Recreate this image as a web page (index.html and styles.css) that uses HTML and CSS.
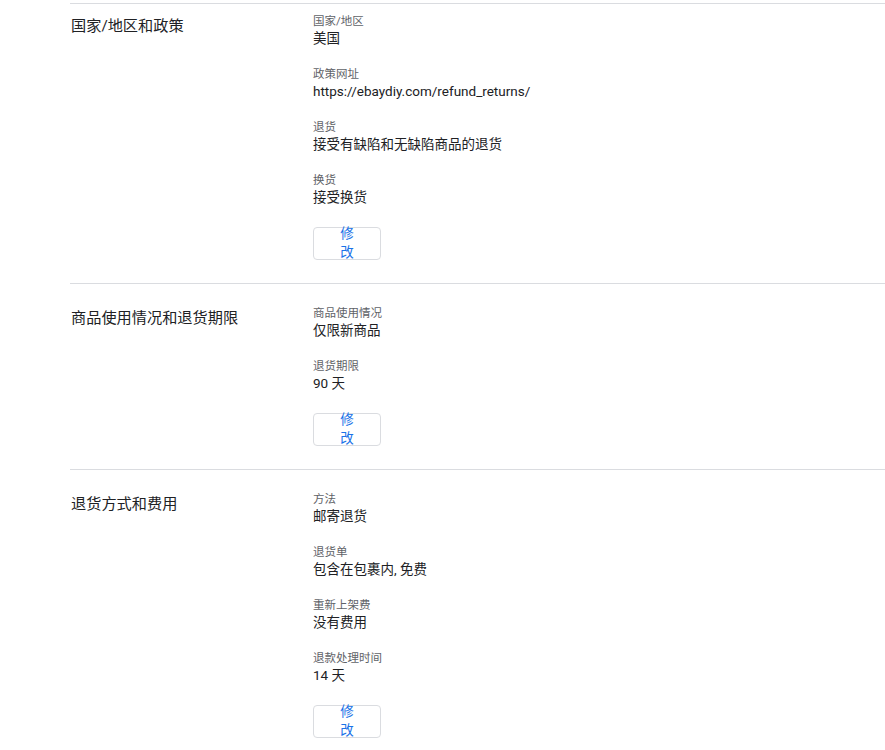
FILE: index.html
```html
<!DOCTYPE html>
<html lang="zh-CN">
<head>
    <meta charset="UTF-8">
    <title>退货政策</title>
    <link rel="stylesheet" href="styles.css">
</head>
<body>
    <div class="policy">
        <!-- 国家/地区和政策 -->
        <section class="block first">
            <h2 class="block-title">国家/地区和政策</h2>
            <div class="fields">
                <div class="field">
                    <div class="label">国家/地区</div>
                    <div class="value">美国</div>
                </div>
                <div class="field">
                    <div class="label">政策网址</div>
                    <div class="value">https://ebaydiy.com/refund_returns/</div>
                </div>
                <div class="field">
                    <div class="label">退货</div>
                    <div class="value">接受有缺陷和无缺陷商品的退货</div>
                </div>
                <div class="field">
                    <div class="label">换货</div>
                    <div class="value">接受换货</div>
                </div>
                <button class="edit-btn"><span>修改</span></button>
            </div>
        </section>

        <!-- 商品使用情况和退货期限 -->
        <section class="block">
            <h2 class="block-title">商品使用情况和退货期限</h2>
            <div class="fields">
                <div class="field">
                    <div class="label">商品使用情况</div>
                    <div class="value">仅限新商品</div>
                </div>
                <div class="field">
                    <div class="label">退货期限</div>
                    <div class="value">90 天</div>
                </div>
                <button class="edit-btn"><span>修改</span></button>
            </div>
        </section>

        <!-- 退货方式和费用 -->
        <section class="block">
            <h2 class="block-title">退货方式和费用</h2>
            <div class="fields">
                <div class="field">
                    <div class="label">方法</div>
                    <div class="value">邮寄退货</div>
                </div>
                <div class="field">
                    <div class="label">退货单</div>
                    <div class="value">包含在包裹内, 免费</div>
                </div>
                <div class="field">
                    <div class="label">重新上架费</div>
                    <div class="value">没有费用</div>
                </div>
                <div class="field">
                    <div class="label">退款处理时间</div>
                    <div class="value">14 天</div>
                </div>
                <button class="edit-btn"><span>修改</span></button>
            </div>
        </section>
    </div>
</body>
</html>
```

FILE: styles.css
```css
body {
    margin: 0;
    font-family: Roboto, "Noto Sans CJK SC", sans-serif;
    background-color: #ffffff;
    color: #202124;
}
.policy {
    padding-top: 3px;
    margin-left: 70px;
}
.block {
    display: flex;
    border-top: 1px solid #dadce0;
    padding: 22px 0 23px 0;
}
.block.first {
    padding-top: 10px;
}
.block-title {
    width: 242px;
    margin: 0;
    padding: 2px 0 0 1px;
    font-size: 15.2px;
    font-weight: normal;
    line-height: 20px;
    color: #202124;
}
.fields {
    display: flex;
    flex-direction: column;
    align-items: flex-start;
}
.field {
    margin-bottom: 19px;
}
.label {
    font-size: 11.5px;
    line-height: 15px;
    color: #5f6368;
}
.value {
    font-size: 13.5px;
    line-height: 19px;
    color: #202124;
}
.edit-btn {
    margin-top: 1px;
    width: 68px;
    height: 33px;
    padding: 0 20px;
    border: 1px solid #dadce0;
    border-radius: 4px;
    background: #ffffff;
    font-family: Roboto, "Noto Sans CJK SC", sans-serif;
    font-size: 13.5px;
    line-height: 19px;
    color: #1a73e8;
    display: flex;
    align-items: flex-start;
    justify-content: center;
    text-align: center;
    overflow: visible;
}
.edit-btn span {
    margin-top: -4px;
}
```
